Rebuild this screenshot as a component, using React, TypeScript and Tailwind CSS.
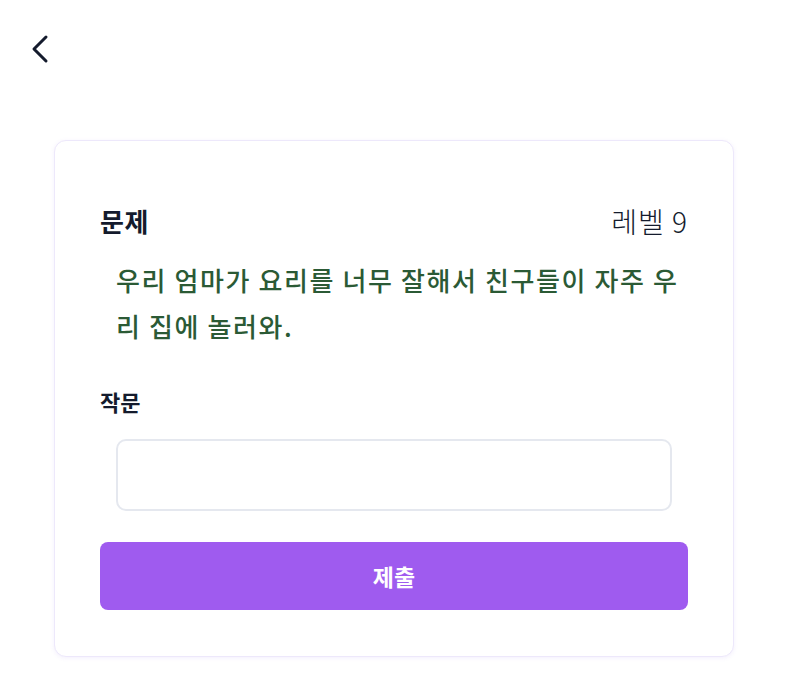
export default function App() {
  const font = { fontFamily: '"Noto Sans CJK KR", "Noto Sans", sans-serif' };
  return (
    <div className="min-h-screen bg-white" style={font}>
      <div className="px-[28px] pt-[34px]">
        <button className="flex h-[30px] w-[24px] items-center justify-center text-[#141b2d]">
          <svg width="18" height="30" viewBox="0 0 18 30" fill="none" stroke="currentColor" strokeWidth="3" strokeLinecap="round" strokeLinejoin="round">
            <path d="M15 3 L3 15 L15 27" />
          </svg>
        </button>
      </div>

      <div className="ml-[54px] mt-[76px] w-[680px] rounded-xl border border-[#ede8fb] bg-white px-[45px] pb-[46px] pt-[64px] shadow-[0_1px_4px_rgba(160,120,240,0.12)]">
        <div className="flex items-center justify-between leading-[32px]">
          <h2 className="text-[26px] font-bold tracking-[0.5px] text-[#141b2d]">문제</h2>
          <span className="text-[28px] font-light tracking-[1px] text-[#141b2d]">레벨 9</span>
        </div>

        <p className="mt-[20px] break-all pl-4 text-[26px] font-medium leading-[46px] tracking-[1.6px] text-[#2b5a35]">
          우리 엄마가 요리를 너무 잘해서 친구들이 자주 우리 집에 놀러와.
        </p>

        <label className="mt-[37px] block text-[22px] font-bold leading-[30px] text-[#141b2d]">작문</label>

        <div className="mx-4 mt-[23px]">
          <textarea className="block h-[72px] w-full resize-none rounded-[10px] border-2 border-[#e5e8ef] px-3 py-2 text-lg outline-none" />
        </div>

        <button className="mt-[31px] flex h-[68px] w-full items-center justify-center rounded-lg bg-[#9f5bef] text-[23px] font-bold text-white">
          제출
        </button>
      </div>
    </div>
  );
}
